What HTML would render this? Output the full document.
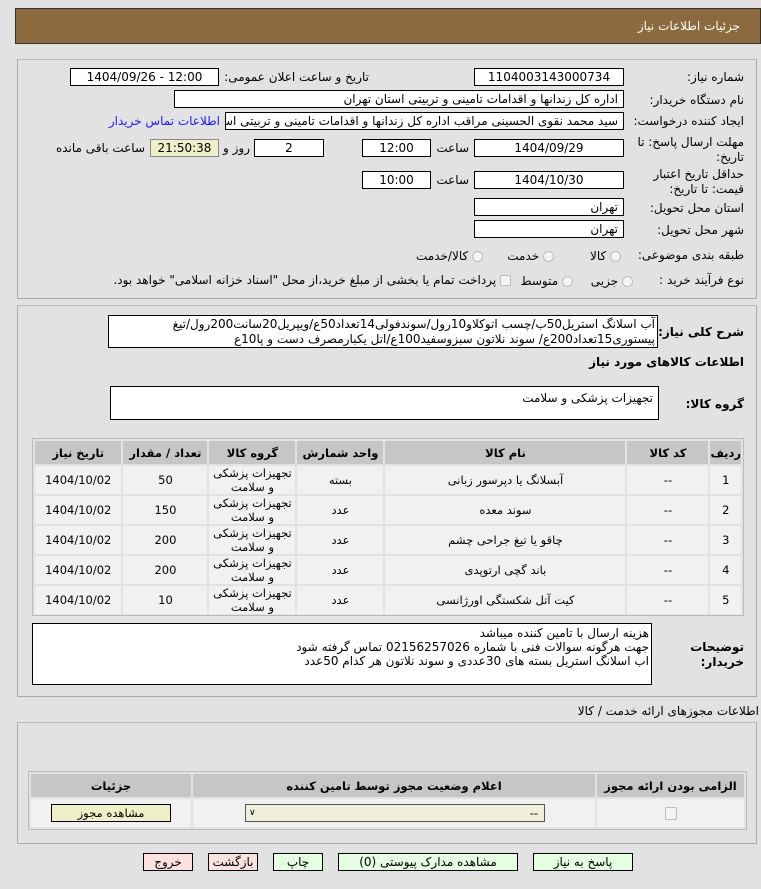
<!DOCTYPE html>
<html><head><meta charset="utf-8"><style>
*{box-sizing:border-box;margin:0;padding:0}
body{width:761px;height:889px;background:#e2e2e2;font-family:"DejaVu Sans","Liberation Sans",sans-serif;font-size:12px;color:#000;position:relative;overflow:hidden}
.a{position:absolute}
.hdr{left:15px;top:8px;width:746px;height:36px;background:#8b6a3e;border:1px solid #333;color:#fff;font-size:12px}
.pn{border:1px solid #aaa;border-top-color:#bbb}
.box{position:absolute;background:#fff;border:1px solid #000;height:18px;line-height:16px;padding:0 5px;white-space:nowrap;overflow:hidden;font-size:12px}
.c{text-align:center}.r{text-align:right;direction:rtl}
.lbl{position:absolute;direction:rtl;text-align:right;font-size:12px;white-space:nowrap}
.b{font-weight:bold}
table{border-collapse:separate;border-spacing:2px;position:absolute;direction:rtl}
td,th{text-align:center;font-size:11.5px}
th{background:#c6c6c6;height:23px;font-weight:bold}
td{background:#f1f1f1;height:28px;line-height:14px}
.rad{display:inline-block;width:11px;height:11px;border:1px solid #bbb;border-radius:50%;background:#f4f4f4;vertical-align:middle}
.btn{position:absolute;top:853px;height:18px;border:1px solid #000;text-align:center;line-height:16px;font-size:12px;direction:rtl}
</style></head><body>
<div class="a hdr"><div class="a lbl" style="right:20px;top:10px;color:#fff">جزئیات اطلاعات نیاز</div></div>

<div class="a pn" style="left:17px;top:59px;width:740px;height:240px"></div>
<div class="lbl" style="right:17px;top:70px">شماره نیاز:</div>
<div class="box c" style="left:474px;top:68px;width:150px">1104003143000734</div>
<div class="lbl" style="right:392px;top:70px">تاریخ و ساعت اعلان عمومی:</div>
<div class="box c" style="left:70px;top:68px;width:149px">1404/09/26 - 12:00</div>

<div class="lbl" style="right:17px;top:93px">نام دستگاه خریدار:</div>
<div class="box r" style="left:174px;top:90px;width:450px">اداره کل زندانها و اقدامات تامینی و تربیتی استان تهران</div>

<div class="lbl" style="right:17px;top:114px">ایجاد کننده درخواست:</div>
<div class="box r" style="left:225px;top:112px;width:399px">سید محمد نقوی الحسینی مراقب  اداره کل زندانها و اقدامات تامینی و تربیتی استان تهران</div>
<div class="lbl" style="right:541px;top:114px;color:#1a1aff">اطلاعات تماس خریدار</div>

<div class="lbl" style="right:17px;top:135px;line-height:15px">مهلت ارسال پاسخ: تا<br>تاریخ:</div>
<div class="box c" style="left:474px;top:139px;width:150px">1404/09/29</div>
<div class="lbl" style="right:292px;top:141px">ساعت</div>
<div class="box c" style="left:362px;top:139px;width:69px">12:00</div>
<div class="box c" style="left:254px;top:139px;width:70px">2</div>
<div class="lbl" style="right:511px;top:141px">روز و</div>
<div class="box c" style="left:150px;top:139px;width:69px;background:#f0f0c8;border-color:#888">21:50:38</div>
<div class="lbl" style="right:616px;top:141px">ساعت باقی مانده</div>

<div class="lbl" style="right:17px;top:167px;line-height:15px">حداقل تاریخ اعتبار<br>قیمت: تا تاریخ:</div>
<div class="box c" style="left:474px;top:171px;width:150px">1404/10/30</div>
<div class="lbl" style="right:292px;top:173px">ساعت</div>
<div class="box c" style="left:362px;top:171px;width:69px">10:00</div>

<div class="lbl" style="right:17px;top:201px">استان محل تحویل:</div>
<div class="box r" style="left:474px;top:198px;width:150px">تهران</div>
<div class="lbl" style="right:17px;top:223px">شهر محل تحویل:</div>
<div class="box r" style="left:474px;top:220px;width:150px">تهران</div>

<div class="lbl" style="right:17px;top:248px">طبقه بندی موضوعی:</div>
<div class="lbl" style="right:140px;top:249px"><span class="rad"></span> کالا</div>
<div class="lbl" style="right:207px;top:249px"><span class="rad"></span> خدمت</div>
<div class="lbl" style="right:278px;top:249px"><span class="rad"></span> کالا/خدمت</div>

<div class="lbl" style="right:17px;top:273px">نوع فرآیند خرید :</div>
<div class="lbl" style="right:128px;top:274px"><span class="rad"></span> جزیی</div>
<div class="lbl" style="right:188px;top:274px"><span class="rad"></span> متوسط</div>
<div class="lbl" style="right:250px;top:273px"><span class="rad" style="border-radius:2px"></span> پرداخت تمام یا بخشی از مبلغ خرید،از محل "اسناد خزانه اسلامی" خواهد بود.</div>

<div class="a pn" style="left:17px;top:305px;width:740px;height:392px"></div>
<div class="lbl b" style="right:17px;top:325px">شرح کلی نیاز:</div>
<div class="box r" style="left:108px;top:315px;width:550px;height:33px;line-height:15px;white-space:normal;padding:1px 2px">آب اسلانگ استریل50ب/چسب اتوکلاو10رول/سوندفولی14تعداد50ع/ویپریل20سانت200رول/تیغ پیستوری15تعداد200ع/ سوند نلاتون سبزوسفید100ع/اتل یکبارمصرف دست و پا10ع</div>
<div class="lbl b" style="right:17px;top:355px">اطلاعات کالاهای مورد نیاز</div>
<div class="lbl b" style="right:17px;top:397px">گروه کالا:</div>
<div class="box r" style="left:110px;top:386px;width:549px;height:34px;padding:3px 5px">تجهیزات پزشکی و سلامت</div>

<div class="a" style="left:32px;top:438px;width:712px;height:178px;border:1px solid #bbb"></div>
<table style="left:33px;top:439px;width:710px">
<tr><th style="width:27px">ردیف</th><th style="width:81px">کد کالا</th><th style="width:240px">نام کالا</th><th style="width:86px">واحد شمارش</th><th style="width:86px">گروه کالا</th><th style="width:84px">تعداد / مقدار</th><th>تاریخ نیاز</th></tr>
<tr><td>1</td><td>--</td><td>آبسلانگ یا دپرسور زبانی</td><td>بسته</td><td>تجهیزات پزشکی و سلامت</td><td>50</td><td>1404/10/02</td></tr>
<tr><td>2</td><td>--</td><td>سوند معده</td><td>عدد</td><td>تجهیزات پزشکی و سلامت</td><td>150</td><td>1404/10/02</td></tr>
<tr><td>3</td><td>--</td><td>چاقو یا تیغ جراحی چشم</td><td>عدد</td><td>تجهیزات پزشکی و سلامت</td><td>200</td><td>1404/10/02</td></tr>
<tr><td>4</td><td>--</td><td>باند گچی ارتوپدی</td><td>عدد</td><td>تجهیزات پزشکی و سلامت</td><td>200</td><td>1404/10/02</td></tr>
<tr><td>5</td><td>--</td><td>کیت آتل شکستگی اورژانسی</td><td>عدد</td><td>تجهیزات پزشکی و سلامت</td><td>10</td><td>1404/10/02</td></tr>
</table>

<div class="lbl b" style="right:17px;top:640px;line-height:15px">توضیحات<br>خریدار:</div>
<div class="box r" style="left:32px;top:623px;width:620px;height:62px;line-height:14px;padding:2px 2px;white-space:normal">هزینه ارسال با تامین کننده میباشد<br>جهت هرگونه سوالات فنی با شماره 02156257026 تماس گرفته شود<br>اب اسلانگ استریل بسته های 30عددی و سوند نلاتون هر کدام 50عدد</div>

<div class="lbl" style="right:2px;top:704px">اطلاعات مجوزهای ارائه خدمت / کالا</div>
<div class="a pn" style="left:17px;top:722px;width:740px;height:122px"></div>
<table style="left:28px;top:771px;width:719px;border:1px solid #bbb">
<tr><th style="width:147px">الزامی بودن ارائه مجوز</th><th style="width:402px">اعلام وضعیت مجوز توسط تامین کننده</th><th>جزئیات</th></tr>
<tr><td style="height:23px"><span class="rad" style="border-radius:2px;width:12px;height:13px"></span></td>
<td><div style="margin:0 auto 0 52px;width:300px;height:18px;border:1px solid #555;background:#efefdc;text-align:right;direction:rtl;padding:0 6px;line-height:16px;position:relative">--<span style="position:absolute;left:3px;top:0;font-size:9px">&#8744;</span></div></td>
<td><div style="margin:0 auto;width:120px;height:18px;border:1px solid #000;background:#efefc8;line-height:16px">مشاهده مجوز</div></td></tr>
</table>

<div class="btn" style="left:533px;width:100px;background:#e5fde0">پاسخ به نیاز</div>
<div class="btn" style="left:338px;width:180px;background:#e5fde0">مشاهده مدارک پیوستی (0)</div>
<div class="btn" style="left:273px;width:50px;background:#e5fde0">چاپ</div>
<div class="btn" style="left:208px;width:50px;background:#fde0e0">بازگشت</div>
<div class="btn" style="left:143px;width:50px;background:#fde0e0">خروج</div>
</body></html>
